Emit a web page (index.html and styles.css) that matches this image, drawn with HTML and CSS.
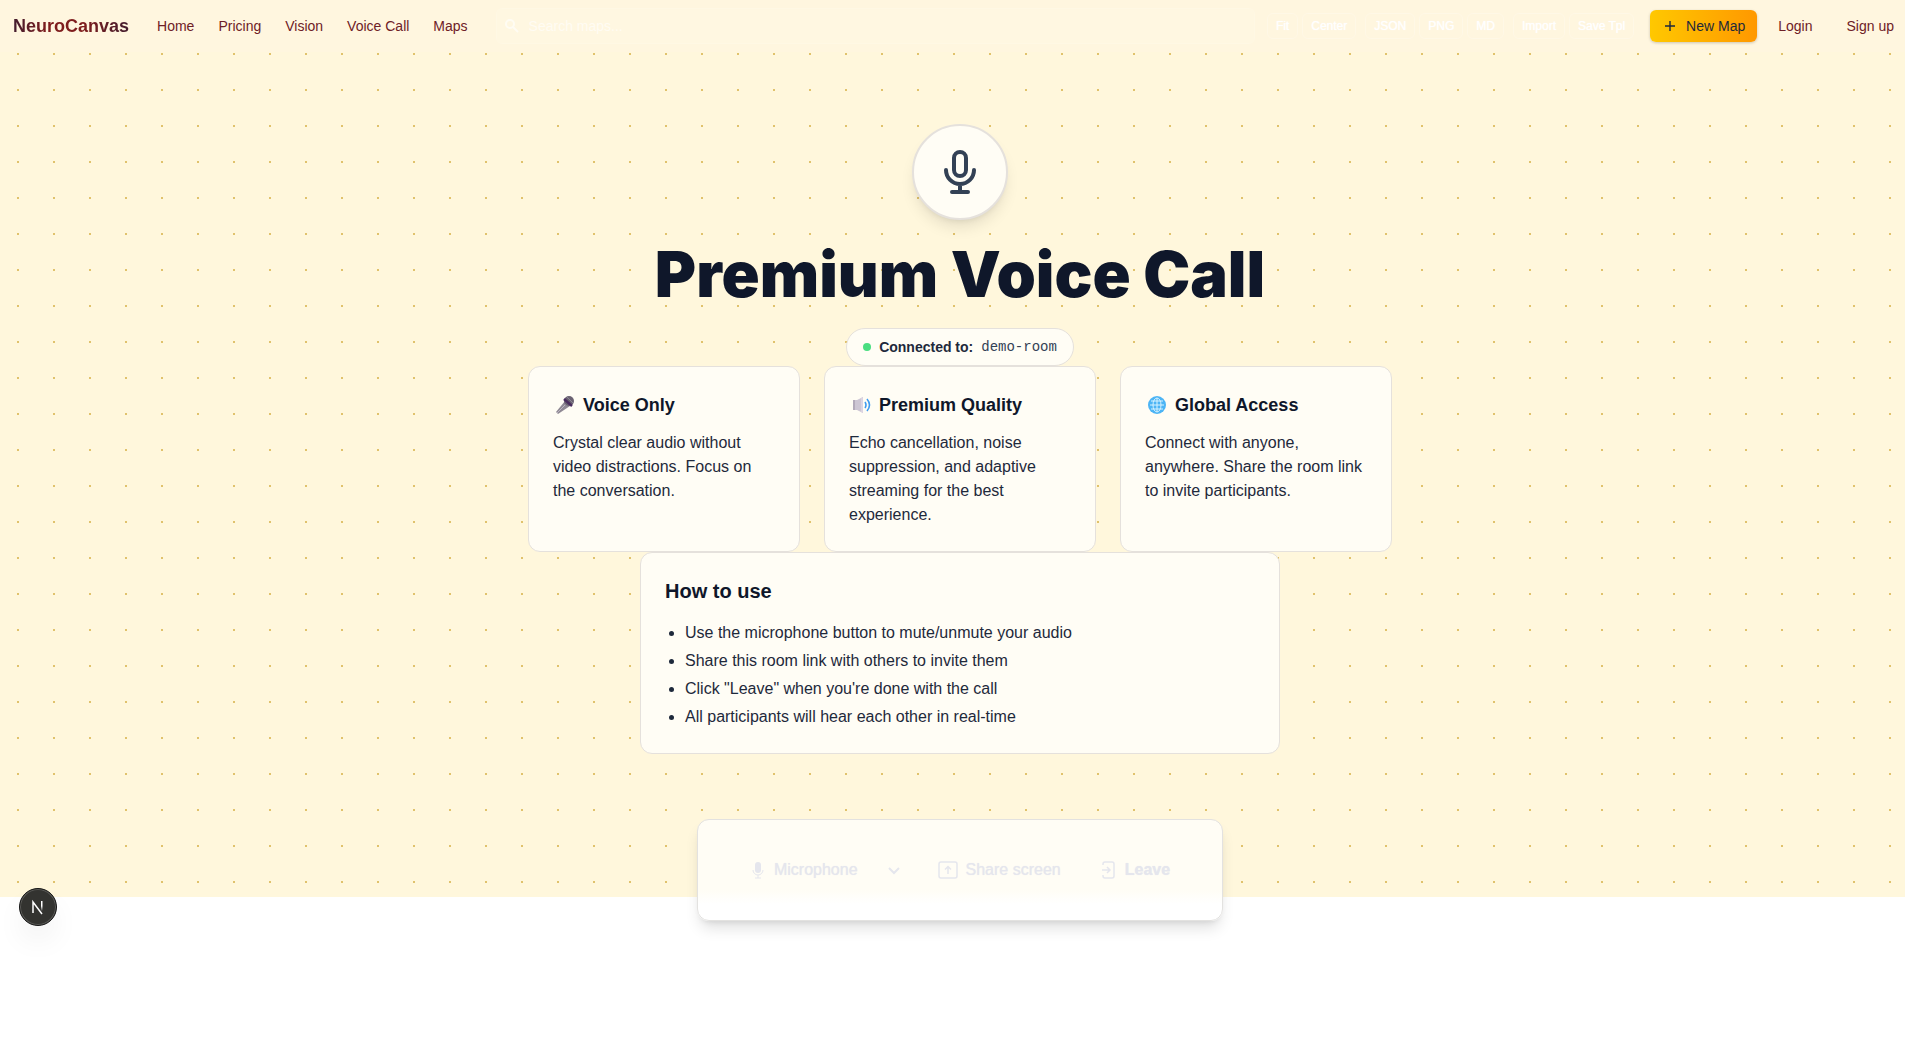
FILE: index.html
```html
<!DOCTYPE html>
<html lang="en">
<head>
<meta charset="utf-8">
<meta name="viewport" content="width=device-width, initial-scale=1">
<title>NeuroCanvas - Premium Voice Call</title>
<link rel="stylesheet" href="styles.css">
</head>
<body>
<div class="page">
  <header class="topbar">
    <a class="brand" href="#">NeuroCanvas</a>
    <nav class="nav">
      <a href="#">Home</a>
      <a href="#">Pricing</a>
      <a href="#">Vision</a>
      <a href="#">Voice Call</a>
      <a href="#">Maps</a>
    </nav>
    <label class="search">
      <svg width="14" height="14" viewBox="0 0 14 14" fill="none" stroke="currentColor" stroke-width="2" aria-hidden="true"><circle cx="5" cy="5" r="4"/><path d="M8 8l5 5"/></svg>
      <input type="search" placeholder="Search maps..." aria-label="Search maps">
    </label>
    <div class="tools">
      <div class="tool-group"><button>Fit</button><button>Center</button></div>
      <div class="tool-group"><button>JSON</button><button>PNG</button><button>MD</button></div>
      <div class="tool-group"><button>Import</button><button>Save Tpl</button></div>
    </div>
    <button class="new-map">
      <svg width="16" height="16" viewBox="0 0 16 16" fill="none" stroke="currentColor" stroke-width="1.4" aria-hidden="true"><path d="M8 3v10M3 8h10"/></svg>
      New Map
    </button>
    <div class="account"><a href="#">Login</a><a href="#">Sign up</a></div>
  </header>

  <main class="content">
    <div class="hero-icon">
      <svg width="48" height="48" viewBox="0 0 24 24" fill="none" stroke="currentColor" stroke-width="2" stroke-linecap="round" stroke-linejoin="round" aria-hidden="true"><path d="M19 11a7 7 0 0 1-7 7m0 0a7 7 0 0 1-7-7m7 7v4m0 0H8m4 0h4m-4-8a3 3 0 0 1-3-3V5a3 3 0 1 1 6 0v6a3 3 0 0 1-3 3z"/></svg>
    </div>
    <h1>Premium Voice Call</h1>
    <p class="status"><span class="status-dot"></span><strong>Connected to:</strong><code>demo-room</code></p>

    <section class="features">
      <article class="card">
        <h2>
          <svg width="24" height="20" viewBox="0 0 24 20" aria-hidden="true"><path d="M3 17L12 6l5 5L5 19z" fill="#8f8994"/><path d="M4 18l9-9" stroke="#bdb7c2"/><circle cx="16" cy="6" r="5" fill="#6a6272"/><path d="M11 4l8 7" stroke="#4a2d5e" stroke-width="2.500"/><path d="M14 2l6 6" stroke="#8d8695"/></svg>
          Voice Only
        </h2>
        <p>Crystal clear audio without video distractions. Focus on the conversation.</p>
      </article>
      <article class="card">
        <h2>
          <svg width="24" height="20" viewBox="0 0 24 20" aria-hidden="true"><path d="M4 5h4l6-3v16l-6-3H4z" fill="#cdc6d4"/><path d="M4 5h2v10H4z" fill="#b3abbb"/><path d="M12 3l2-1v16l-2-1z" fill="#dcd5e2"/><path d="M16 7q2 3 0 6M18 4q5 6 0 12" stroke="#3f9cf0" stroke-width="1.600" fill="none"/></svg>
          Premium Quality
        </h2>
        <p>Echo cancellation, noise suppression, and adaptive streaming for the best experience.</p>
      </article>
      <article class="card">
        <h2>
          <svg width="24" height="20" viewBox="0 0 24 20" aria-hidden="true"><circle cx="12" cy="10" r="9" fill="#4db5f5"/><g fill="none" stroke="#d5f2ff"><ellipse cx="12" cy="10" rx="4" ry="7"/><path d="M12 3v14M5 10h14M6 6h12M6 14h12"/></g></svg>
          Global Access
        </h2>
        <p>Connect with anyone, anywhere. Share the room link to invite participants.</p>
      </article>
    </section>

    <section class="card howto">
      <h2>How to use</h2>
      <ul>
        <li>Use the microphone button to mute/unmute your audio</li>
        <li>Share this room link with others to invite them</li>
        <li>Click "Leave" when you're done with the call</li>
        <li>All participants will hear each other in real-time</li>
      </ul>
    </section>

    <div class="controls">
      <button class="mic">
        <svg width="16" height="18" viewBox="0 0 16 18" aria-hidden="true"><rect x="5" y="1" width="6" height="11" rx="3" fill="currentColor"/><path d="M3 9a5 5 0 0 0 10 0M8 14v3M5 17h6" fill="none" stroke="currentColor"/></svg>
        Microphone
      </button>
      <button class="menu" aria-label="Choose microphone">
        <svg width="16" height="16" viewBox="0 0 16 16" fill="none" stroke="currentColor" stroke-width="2" aria-hidden="true"><path d="M3 6l5 5 5-5"/></svg>
      </button>
      <button class="share">
        <svg width="20" height="18" viewBox="0 0 20 18" fill="none" stroke="currentColor" stroke-width="1.500" aria-hidden="true"><rect x="1" y="1" width="18" height="16" rx="2"/><path d="M10 13V6M7 8.500l3-3 3 3"/></svg>
        Share screen
      </button>
      <button class="leave">
        <svg width="16" height="18" viewBox="0 0 16 18" fill="none" stroke="currentColor" stroke-width="1.500" aria-hidden="true"><path d="M2 4V3q0-2 2-2h7q2 0 2 2v12q0 2-2 2H4q-2 0-2-2v-1M1 9h7M6 6l3 3-3 3"/></svg>
        Leave
      </button>
    </div>
  </main>

  <button class="dev-badge" aria-label="Open developer tools">
    <svg width="20" height="20" viewBox="0 0 20 20" fill="none" stroke-width="1.500" aria-hidden="true"><defs><linearGradient id="fade" x1="0" y1="0" x2="0" y2="1"><stop offset="0.500" stop-color="#fff"/><stop offset="1" stop-color="#fff" stop-opacity="0"/></linearGradient></defs><path d="M5 16V5l9 12" stroke="#fff"/><path d="M13 4h1.500v10H13z" fill="url(#fade)"/></svg>
  </button>
</div>
</body>
</html>
```
FILE: styles.css
```css
* { box-sizing: border-box; }

body {
  margin: 0;
  min-height: 100vh;
  background: #fff;
  color: #1e293b;
  font-family: "Liberation Sans", Arial, sans-serif;
  font-size: 16px;
  line-height: 24px;
}

a { color: inherit; text-decoration: none; }
button { font: inherit; color: inherit; cursor: pointer; }
h1, h2, p, ul { margin: 0; }

.page {
  position: relative;
  background-color: #fff7dc;
  background-image: conic-gradient(from 270deg at 2px 2px, #e0c26c 90deg, transparent 0);
  background-size: 36px 36px;
  background-position: 17px 17px;
}

.topbar {
  display: flex;
  align-items: center;
  height: 52px;
  padding: 0 11px 0 13px;
  background: #fff6df;
  font-size: 14px;
  line-height: 20px;
}

.brand {
  font-size: 18px;
  font-weight: 700;
  background: linear-gradient(90deg, #431d2e, #7f1d1d 30%, #7f1d1d 60%, #431d2e);
  background-clip: text;
  color: transparent;
}

.nav { display: flex; gap: 24px; margin: 0 28px; color: #6e2026; }

.search {
  flex: 1;
  display: flex;
  align-items: center;
  gap: 10px;
  height: 36px;
  padding: 0 8px;
  border: 1px solid #fff8e4;
  border-radius: 6px;
  background: #fff7e1;
  color: #fffcf3;
}

.search input {
  flex: 1;
  min-width: 0;
  padding: 0;
  border: 0;
  outline: 0;
  background: none;
  color: inherit;
  font: inherit;
}

.search input::placeholder { color: #fffcf3; opacity: 1; }

.tools { display: flex; gap: 9px; margin: 0 16px 0 12px; }
.tool-group { display: flex; gap: 4px; }

.tools button {
  height: 26px;
  padding: 0 8px;
  border: 1px solid #fff8e6;
  border-radius: 6px;
  background: none;
  color: #fff;
  font-size: 12px;
  text-shadow: 0 0 1px #fff;
}

.new-map {
  display: flex;
  align-items: center;
  gap: 8px;
  height: 32px;
  padding: 0 12px;
  border: 0;
  border-radius: 6px;
  background: linear-gradient(90deg, #ffc800, #ff9800);
  box-shadow: 0 1px 3px rgba(0, 0, 0, 0.2);
  color: #1e293b;
}

.account { display: flex; gap: 34px; margin-left: 21px; color: #6e2026; }

.content {
  display: flex;
  flex-direction: column;
  align-items: center;
  padding: 72px 0 0 15px;
}

.hero-icon {
  display: grid;
  place-items: center;
  width: 96px;
  height: 96px;
  border: 2px solid #e5e1dc;
  border-radius: 50%;
  background: #fffdf5;
  box-shadow: 0 10px 15px -3px rgba(0, 0, 0, 0.1), 0 4px 6px -4px rgba(0, 0, 0, 0.1);
  color: #334155;
}

h1 {
  margin: 24px 0;
  color: #0f172a;
  font-family: "Arial Black", Inter, sans-serif;
  font-size: 63px;
  font-weight: 900;
  line-height: 60px;
}

.status {
  display: flex;
  align-items: center;
  gap: 8px;
  padding: 8px 16px;
  border: 1px solid #e5e1dc;
  border-radius: 19px;
  background: #fffdf5;
  font-size: 14px;
  line-height: 20px;
}

.status-dot { width: 8px; height: 8px; border-radius: 50%; background: #4ade80; }
.status code { font-family: "Liberation Mono", monospace; color: #334155; }

.features {
  display: grid;
  grid-template-columns: repeat(3, 1fr);
  gap: 24px;
  width: 100%;
  max-width: 864px;
}

.card {
  padding: 24px;
  border: 1px solid #e5e1dc;
  border-radius: 12px;
  background: #fffdf5;
}

.card h2 {
  display: flex;
  align-items: center;
  gap: 6px;
  margin-bottom: 12px;
  color: #0f172a;
  font-size: 18px;
  line-height: 28px;
}

.howto { width: 100%; max-width: 640px; }
.howto h2 { margin-bottom: 16px; font-size: 20px; }
.howto ul { display: grid; gap: 4px; padding-left: 20px; }

.controls {
  z-index: 1;
  display: flex;
  align-items: center;
  justify-content: center;
  width: 100%;
  max-width: 526px;
  height: 102px;
  margin: 65px 0 -24px;
  border: 1px solid #e3e2e0;
  border-radius: 12px;
  background: linear-gradient(#fffdf5 70%, #fff 84%);
  box-shadow: 0 10px 15px -3px rgba(0, 0, 0, 0.12), 0 4px 6px -4px rgba(0, 0, 0, 0.12);
  color: #e5e6ed;
}

.controls button {
  display: flex;
  align-items: center;
  gap: 8px;
  padding: 0;
  border: 0;
  background: none;
  text-shadow: 0 0 1px #e5e6ed;
}

.controls .menu { margin: 0 36px 0 28px; }
.controls .leave { margin-left: 40px; font-weight: 700; }

.dev-badge {
  position: absolute;
  left: 19px;
  bottom: -29px;
  display: grid;
  place-items: center;
  width: 38px;
  height: 38px;
  padding: 0;
  border: 1px solid #171717;
  border-radius: 50%;
  background: #333330;
  box-shadow: inset 0 0 0 1px #5b5b58, 0 16px 32px -8px rgba(0, 0, 0, 0.14);
}
```
